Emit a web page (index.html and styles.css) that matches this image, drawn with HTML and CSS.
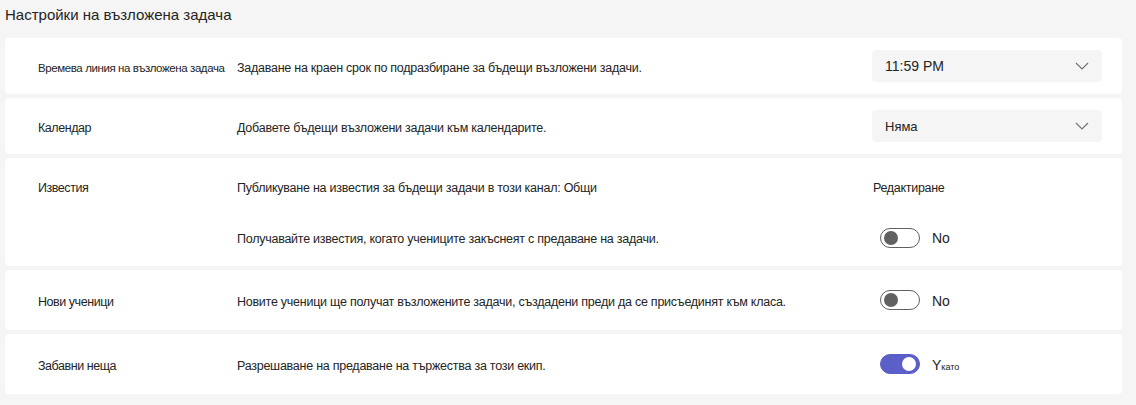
FILE: index.html
```html
<!DOCTYPE html>
<html lang="bg">
<head>
  <meta charset="UTF-8" />
  <title>Настройки на възложена задача</title>
  <link rel="stylesheet" href="styles.css">
</head>
<body>

  <h1 class="page-title">Настройки на възложена задача</h1>

  <div class="settings">

    <div class="card card-short">
      <div class="label label-small">Времева линия на възложена задача</div>
      <div class="desc">Задаване на краен срок по подразбиране за бъдещи възложени задачи.</div>
      <div class="control">
        <div class="select">
          <span>11:59 PM</span>
          <svg class="chevron" width="14" height="8" viewBox="0 0 14 8"><path d="M1 1l6 6 6-6" fill="none" stroke="#707070" stroke-width="1.1"/></svg>
        </div>
      </div>
    </div>

    <div class="card card-short">
      <div class="label">Календар</div>
      <div class="desc">Добавете бъдещи възложени задачи към календарите.</div>
      <div class="control">
        <div class="select select-small">
          <span>Няма</span>
          <svg class="chevron" width="14" height="8" viewBox="0 0 14 8"><path d="M1 1l6 6 6-6" fill="none" stroke="#707070" stroke-width="1.1"/></svg>
        </div>
      </div>
    </div>

    <div class="card card-tall">
      <div class="label">Известия</div>
      <div class="desc">Публикуване на известия за бъдещи задачи в този канал: Общи</div>
      <div class="control"><span class="link">Редактиране</span></div>
      <div class="label"></div>
      <div class="desc">Получавайте известия, когато учениците закъснеят с предаване на задачи.</div>
      <div class="control">
        <span class="toggle"></span>
        <span class="toggle-text">No</span>
      </div>
    </div>

    <div class="card">
      <div class="label">Нови ученици</div>
      <div class="desc">Новите ученици ще получат възложените задачи, създадени преди да се присъединят към класа.</div>
      <div class="control">
        <span class="toggle"></span>
        <span class="toggle-text">No</span>
      </div>
    </div>

    <div class="card">
      <div class="label">Забавни неща</div>
      <div class="desc">Разрешаване на предаване на тържества за този екип.</div>
      <div class="control">
        <span class="toggle on"></span>
        <span class="toggle-text">Y<small>като</small></span>
      </div>
    </div>

  </div>

</body>
</html>
```

FILE: styles.css
```css
body {
  margin: 0;
  padding: 0 14px 0 5px;
  background: #f5f5f5;
  color: #242424;
  font-family: "Liberation Sans", Arial, sans-serif;
  font-size: 12.5px;
}

.page-title {
  margin: 0;
  padding-top: 5px;
  height: 33px;
  font-size: 15px;
  font-weight: normal;
  line-height: 20px;
}

.settings {
  display: flex;
  flex-direction: column;
  gap: 4px;
}

.card {
  background: #fff;
  border-radius: 4px;
  height: 60px;
  padding: 0 20px 0 33px;
  box-sizing: border-box;
  display: grid;
  grid-template-columns: 199px 1fr 230px;
  align-items: center;
}

.card-short {
  height: 56px;
}

.card-tall {
  height: 108px;
  grid-template-rows: 20px 20px;
  row-gap: 31px;
  align-content: center;
}

.label,
.desc {
  padding-top: 3px;
  letter-spacing: -0.25px;
}

.label {
  letter-spacing: -0.45px;
}

.label-small {
  font-size: 11.5px;
  letter-spacing: -0.4px;
}

.control {
  display: flex;
  align-items: center;
}

.select {
  flex: 1;
  height: 32px;
  background: #f5f5f5;
  border-radius: 4px;
  display: flex;
  align-items: center;
  justify-content: space-between;
  padding: 0 13px;
  font-size: 14px;
}

.select-small {
  font-size: 13px;
}

.link {
  padding-top: 2px;
  padding-left: 1px;
  letter-spacing: -0.3px;
}

.toggle {
  position: relative;
  width: 40px;
  height: 20px;
  box-sizing: border-box;
  border: 1px solid #616161;
  border-radius: 10px;
  margin-left: 8px;
}

.toggle::after {
  content: "";
  position: absolute;
  left: 3px;
  top: 2px;
  width: 14px;
  height: 14px;
  border-radius: 50%;
  background: #616161;
}

.toggle.on {
  background: #5b5fc7;
  border-color: #5b5fc7;
}

.toggle.on::after {
  left: auto;
  right: 3px;
  background: #fff;
}

.toggle-text {
  margin-left: 12px;
  font-size: 14px;
  padding-top: 1px;
}

.toggle-text small {
  font-size: 9px;
}
```
